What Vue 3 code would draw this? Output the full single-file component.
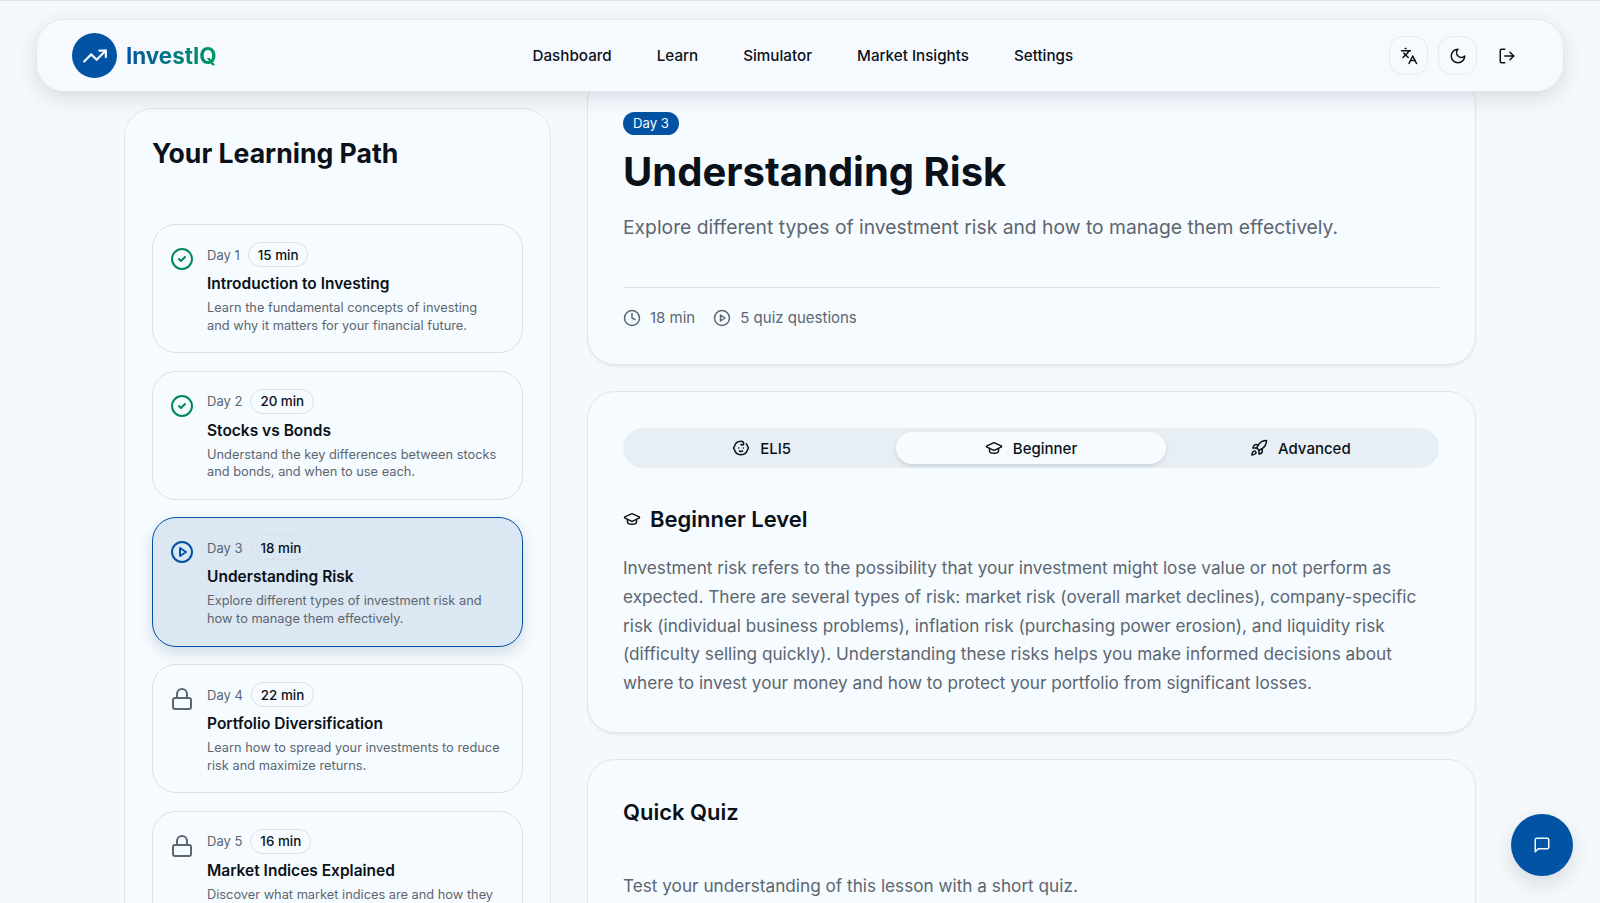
<template>
  <div class="page">
    <header class="nav">
      <div class="brand">
        <span class="logo"><Icon name="trend" class="logo-ic" /></span>
        <span class="brand-name">InvestIQ</span>
      </div>
      <nav class="links">
        <a v-for="l in links" :key="l">{{ l }}</a>
      </nav>
      <div class="actions">
        <button class="act boxed"><Icon name="languages" class="ic20" /></button>
        <button class="act boxed"><Icon name="moon" class="ic20" /></button>
        <button class="act"><Icon name="logout" class="ic20" /></button>
      </div>
    </header>

    <div class="layout">
      <aside class="side">
        <h2 class="side-title">Your Learning Path</h2>
        <div class="lessons">
          <div v-for="l in lessons" :key="l.day" class="lesson" :class="{ active: l.state === 'active' }">
            <Icon :name="stateIcon[l.state]" class="state" :class="l.state" />
            <div class="lesson-body">
              <div class="lesson-top">
                <span class="day">Day {{ l.day }}</span>
                <span class="pill">{{ l.mins }} min</span>
              </div>
              <div class="lesson-title">{{ l.title }}</div>
              <p class="lesson-desc">{{ l.desc }}</p>
            </div>
          </div>
        </div>
      </aside>

      <main class="content">
        <section class="card hero">
          <span class="badge">Day 3</span>
          <h1>Understanding Risk</h1>
          <p class="sub">Explore different types of investment risk and how to manage them effectively.</p>
          <div class="meta">
            <span><Icon name="clock" class="ic18" />18 min</span>
            <span><Icon name="play" class="ic18" />5 quiz questions</span>
          </div>
        </section>

        <section class="card level">
          <div class="tabs">
            <div v-for="t in tabs" :key="t.label" class="tab" :class="{ on: t.label === 'Beginner' }">
              <Icon :name="t.icon" class="ic18" />{{ t.label }}
            </div>
          </div>
          <h3 class="level-title"><Icon name="cap" class="ic18" />Beginner Level</h3>
          <p class="text">Investment risk refers to the possibility that your investment might lose value or not perform as expected. There are several types of risk: market risk (overall market declines), company-specific risk (individual business problems), inflation risk (purchasing power erosion), and liquidity risk (difficulty selling quickly). Understanding these risks helps you make informed decisions about where to invest your money and how to protect your portfolio from significant losses.</p>
        </section>

        <section class="card quiz">
          <h3 class="quiz-title">Quick Quiz</h3>
          <p class="text">Test your understanding of this lesson with a short quiz.</p>
        </section>
      </main>
    </div>

    <button class="fab"><Icon name="chat" class="ic18" /></button>
  </div>
</template>

<script setup>
import { h } from 'vue'

const circle = 'M22 12a10 10 0 1 1-20 0 10 10 0 1 1 20 0z'

const icons = {
  trend: ['M22 7l-8.5 8.5-5-5L2 17', 'M16 7h6v6'],
  languages: ['m5 8 6 6', 'm4 14 6-6 2-3', 'M2 5h12', 'M7 2h1', 'm22 22-5-10-5 10', 'M14 18h6'],
  moon: ['M12 3a6 6 0 0 0 9 9 9 9 0 1 1-9-9Z'],
  logout: ['M9 21H5a2 2 0 0 1-2-2V5a2 2 0 0 1 2-2h4', 'm16 17 5-5-5-5', 'M21 12H9'],
  check: [circle, 'm9 12 2 2 4-4'],
  play: [circle, 'M10 8l6 4-6 4z'],
  lock: ['M5 11h14a2 2 0 0 1 2 2v7a2 2 0 0 1-2 2H5a2 2 0 0 1-2-2v-7a2 2 0 0 1 2-2z', 'M7 11V7a5 5 0 0 1 10 0v4'],
  clock: [circle, 'M12 6v6l4 2'],
  baby: ['M9 12h.01', 'M15 12h.01', 'M10 16c.5.3 1.2.5 2 .5s1.5-.2 2-.5', 'M19 6.3a9 9 0 0 1 1.8 3.9 2 2 0 0 1 0 3.6 9 9 0 0 1-17.6 0 2 2 0 0 1 0-3.6A9 9 0 0 1 12 3c2 0 3.5 1.1 3.5 2.5s-.9 2.5-2 2.5c-.8 0-1.5-.4-1.5-1'],
  cap: ['M21.42 10.922a1 1 0 0 0-.019-1.838L12.83 5.18a2 2 0 0 0-1.66 0L2.6 9.08a1 1 0 0 0 0 1.832l8.57 3.908a2 2 0 0 0 1.66 0z', 'M6 12.5V16a6 3 0 0 0 12 0v-3.5'],
  rocket: ['M4.5 16.5c-1.5 1.26-2 5-2 5s3.74-.5 5-2c.71-.84.7-2.13-.09-2.91a2.18 2.18 0 0 0-2.91-.09z', 'm12 15-3-3a22 22 0 0 1 2-3.95A12.88 12.88 0 0 1 22 2c0 2.72-.78 7.5-6 11a22.35 22.35 0 0 1-4 2z', 'M9 12H4s.55-3.03 2-4c1.62-1.08 5 0 5 0', 'M12 15v5s3.03-.55 4-2c1.08-1.62 0-5 0-5'],
  chat: ['M21 15a2 2 0 0 1-2 2H7l-4 4V5a2 2 0 0 1 2-2h14a2 2 0 0 1 2 2z']
}

const Icon = (props) => h('svg', {
  viewBox: '0 0 24 24',
  fill: 'none',
  stroke: 'currentColor',
  'stroke-width': 2,
  'stroke-linecap': 'round',
  'stroke-linejoin': 'round'
}, icons[props.name].map((d) => h('path', { d })))
Icon.props = ['name']

const links = ['Dashboard', 'Learn', 'Simulator', 'Market Insights', 'Settings']

const stateIcon = { done: 'check', active: 'play', locked: 'lock' }

const lessons = [
  { day: 1, mins: 15, state: 'done', title: 'Introduction to Investing', desc: 'Learn the fundamental concepts of investing and why it matters for your financial future.' },
  { day: 2, mins: 20, state: 'done', title: 'Stocks vs Bonds', desc: 'Understand the key differences between stocks and bonds, and when to use each.' },
  { day: 3, mins: 18, state: 'active', title: 'Understanding Risk', desc: 'Explore different types of investment risk and how to manage them effectively.' },
  { day: 4, mins: 22, state: 'locked', title: 'Portfolio Diversification', desc: 'Learn how to spread your investments to reduce risk and maximize returns.' },
  { day: 5, mins: 16, state: 'locked', title: 'Market Indices Explained', desc: 'Discover what market indices are and how they track the overall market.' }
]

const tabs = [
  { label: 'ELI5', icon: 'baby' },
  { label: 'Beginner', icon: 'cap' },
  { label: 'Advanced', icon: 'rocket' }
]
</script>

<style>
html, body {
  margin: 0;
  background: #f5f9fc;
}
</style>

<style scoped>
.page {
  position: relative;
  box-sizing: border-box;
  height: 100vh;
  overflow: hidden;
  border-top: 1px solid #dfe5ea;
  background: #f5f9fc;
  color: #0a1118;
  font-family: Inter, "Liberation Sans", sans-serif;
}

.nav {
  position: absolute;
  top: 18px;
  left: 36px;
  right: 36px;
  z-index: 5;
  box-sizing: border-box;
  height: 73px;
  padding: 0 37px 0 35px;
  display: flex;
  align-items: center;
  justify-content: space-between;
  background: #f6fafe;
  border: 1px solid #e3e9ee;
  border-radius: 28px;
  box-shadow: 0 6px 20px rgba(20, 40, 60, 0.14);
}

.brand {
  display: flex;
  align-items: center;
  gap: 9px;
}

.logo {
  width: 45px;
  height: 45px;
  border-radius: 50%;
  background: #0353a4;
  color: #f6fafe;
  display: flex;
  align-items: center;
  justify-content: center;
}

.logo-ic {
  width: 26px;
  height: 26px;
}

.brand-name {
  font-size: 22.4px;
  font-weight: 700;
  background: linear-gradient(90deg, #0353a4, #009a5b);
  -webkit-background-clip: text;
  background-clip: text;
  color: transparent;
}

.links {
  display: flex;
  gap: 45px;
  font-size: 15.2px;
  font-weight: 500;
}

.actions {
  display: flex;
  gap: 10px;
}

.act {
  width: 39px;
  height: 39px;
  padding: 0;
  display: flex;
  align-items: center;
  justify-content: center;
  background: transparent;
  color: #0a1118;
  border: 1px solid transparent;
  border-radius: 14px;
}

.act.boxed {
  border-color: #e6ebef;
}

.ic20 {
  width: 18px;
  height: 18px;
}

.ic18 {
  width: 18px;
  height: 18px;
  flex: none;
}

.layout {
  width: 1352px;
  margin: 0 auto;
  display: grid;
  grid-template-columns: 427px 889px;
  gap: 36px;
  align-items: start;
}

.side {
  box-sizing: border-box;
  margin-top: 107px;
  padding: 26px 27px 27px;
  background: #f6fbff;
  border: 1px solid #e0e6eb;
  border-radius: 28px;
}

.side-title {
  margin: 0 0 53px;
  font-size: 26.6px;
  line-height: 36px;
  font-weight: 700;
}

.lessons {
  display: flex;
  flex-direction: column;
  gap: 17.5px;
}

.lesson {
  box-sizing: border-box;
  padding: 17px 20px 18px 17px;
  display: flex;
  gap: 13px;
  background: #f6fbff;
  border: 1px solid #d9e0e6;
  border-radius: 24px;
}

.lesson.active {
  background: #dbe7f3;
  border-color: #0353a4;
  box-shadow: 0 6px 14px rgba(20, 50, 90, 0.16);
}

.state {
  width: 24px;
  height: 24px;
  margin-top: 5px;
  flex: none;
}

.state.done {
  color: #00875a;
}

.state.active {
  color: #0353a4;
}

.state.locked {
  color: #5c6670;
}

.lesson-top {
  display: flex;
  align-items: center;
  gap: 8px;
}

.day {
  font-size: 13px;
  color: #5c6670;
}

.pill {
  box-sizing: border-box;
  height: 25px;
  padding: 0 9px;
  display: flex;
  align-items: center;
  font-size: 13.4px;
  font-weight: 500;
  border: 1px solid #d9e0e6;
  border-radius: 13px;
}

.lesson-title {
  margin-top: 6px;
  font-size: 15.5px;
  line-height: 22px;
  font-weight: 600;
}

.lesson-desc {
  margin: 4px 0 0;
  font-size: 12.8px;
  line-height: 17.6px;
  color: #5c6670;
}

.content {
  margin-top: 74px;
  display: flex;
  flex-direction: column;
  gap: 26px;
}

.card {
  box-sizing: border-box;
  padding: 36px 36px 36px 35px;
  background: #f6fbff;
  border: 1px solid #e0e6eb;
  border-radius: 28px;
  box-shadow: 0 2px 2px rgba(20, 40, 60, 0.06);
}

.hero {
  height: 290px;
}

.badge {
  display: inline-block;
  padding: 0 10px;
  height: 23px;
  line-height: 23px;
  font-size: 13.2px;
  background: #0353a4;
  color: #f6fbff;
  border-radius: 12px;
}

.hero h1 {
  margin: 13px 0 0;
  font-size: 40px;
  line-height: 48px;
  font-weight: 700;
}

.sub {
  margin: 16px 0 0;
  padding-bottom: 45px;
  font-size: 19.3px;
  line-height: 30px;
  color: #5c6670;
  border-bottom: 1px solid #d9e0e6;
}

.meta {
  margin-top: 20px;
  display: flex;
  gap: 18px;
  font-size: 15px;
  color: #5c6670;
}

.meta span {
  display: flex;
  align-items: center;
  gap: 9px;
}

.level {
  height: 342px;
}

.tabs {
  box-sizing: border-box;
  height: 40px;
  padding: 4px;
  display: grid;
  grid-template-columns: repeat(3, 1fr);
  background: #e8eff4;
  border-radius: 20px;
}

.tab {
  display: flex;
  align-items: center;
  justify-content: center;
  gap: 10px;
  font-size: 15px;
  font-weight: 500;
  border-radius: 16px;
}

.tab.on {
  background: #f6fbff;
  box-shadow: 0 2px 4px rgba(20, 40, 60, 0.14);
}

.level-title {
  margin: 35px 0 0;
  display: flex;
  align-items: center;
  gap: 9px;
  font-size: 22px;
  line-height: 32px;
  font-weight: 600;
}

.text {
  margin: 19px 0 0;
  font-size: 17.2px;
  line-height: 28.8px;
  color: #5c6670;
}

.quiz-title {
  margin: 0;
  font-size: 22px;
  line-height: 32px;
  font-weight: 600;
}

.quiz .text {
  margin-top: 44px;
}

.fab {
  position: absolute;
  right: 27px;
  bottom: 27px;
  width: 62px;
  height: 62px;
  padding: 0;
  display: flex;
  align-items: center;
  justify-content: center;
  background: #0353a4;
  color: #f6fbff;
  border: 0;
  border-radius: 50%;
  box-shadow: 0 8px 20px rgba(20, 40, 60, 0.14);
}
</style>
